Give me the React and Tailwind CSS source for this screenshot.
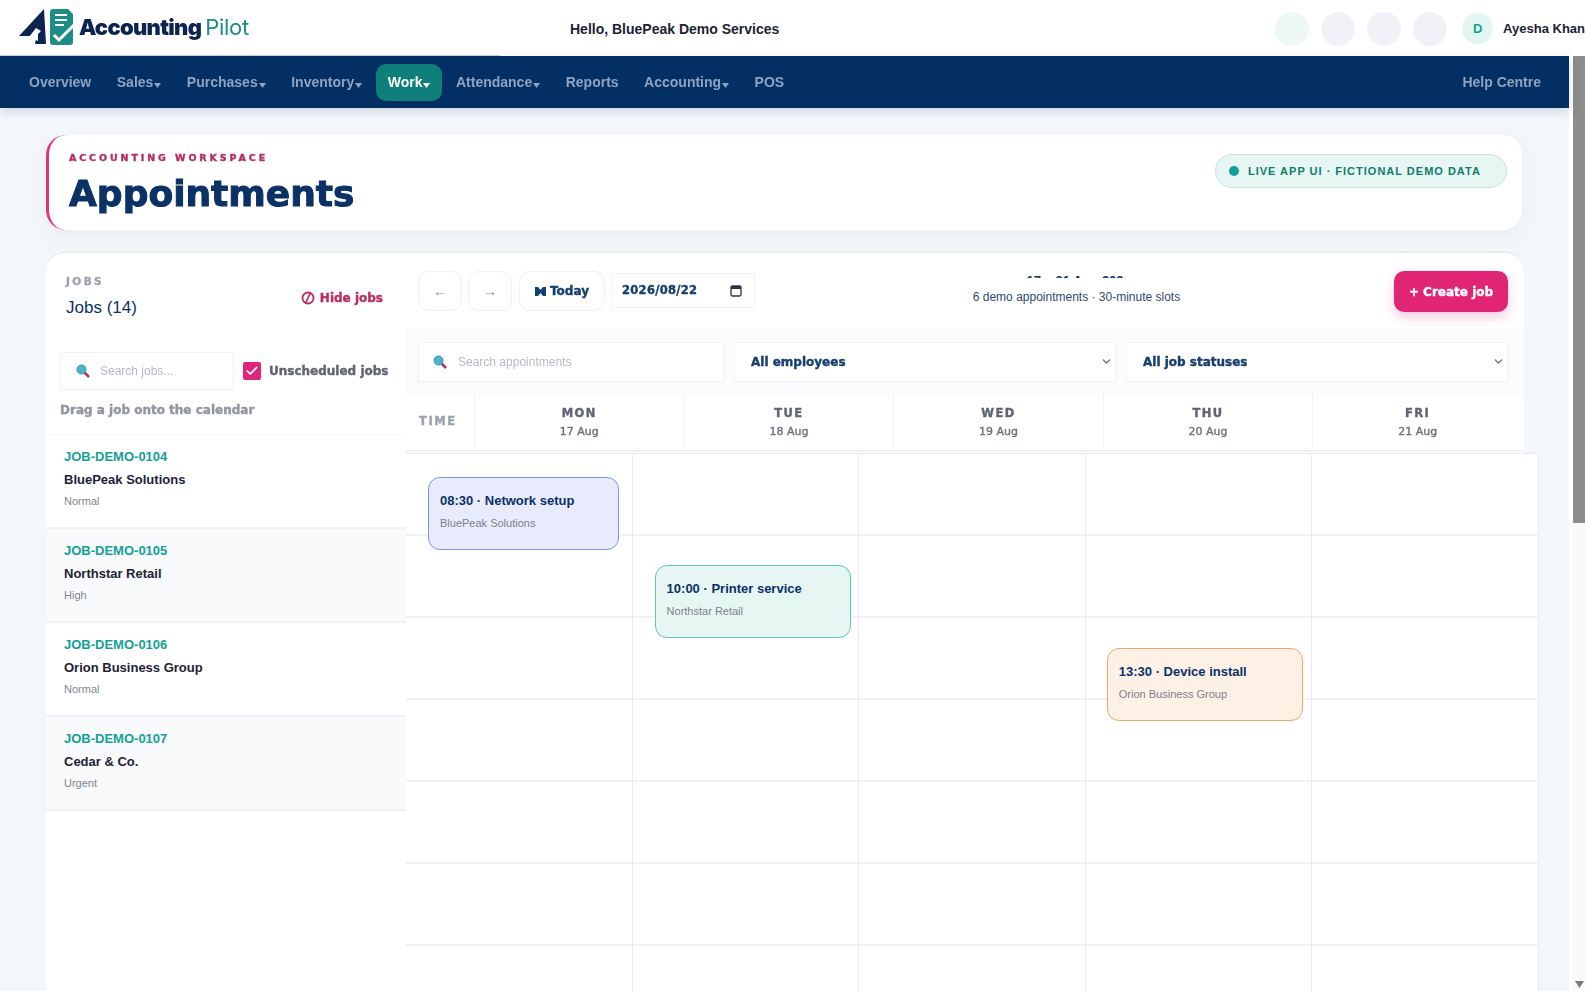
import React from 'react'
import { Check, ChevronDown } from 'lucide-react'

const navItems = [
    { label: 'Overview' },
    { label: 'Sales', caret: true },
    { label: 'Purchases', caret: true },
    { label: 'Inventory', caret: true },
    { label: 'Work', caret: true, active: true },
    { label: 'Attendance', caret: true },
    { label: 'Reports' },
    { label: 'Accounting', caret: true },
    { label: 'POS' },
]

const jobs = [
    { id: 'JOB-DEMO-0104', name: 'BluePeak Solutions', level: 'Normal' },
    { id: 'JOB-DEMO-0105', name: 'Northstar Retail', level: 'High', alt: true },
    { id: 'JOB-DEMO-0106', name: 'Orion Business Group', level: 'Normal' },
    { id: 'JOB-DEMO-0107', name: 'Cedar & Co.', level: 'Urgent', alt: true },
]

const days = [
    { day: 'MON', date: '17 Aug' },
    { day: 'TUE', date: '18 Aug' },
    { day: 'WED', date: '19 Aug' },
    { day: 'THU', date: '20 Aug' },
    { day: 'FRI', date: '21 Aug' },
]

const events = {
    '0-0': {
        title: '08:30 · Network setup',
        client: 'BluePeak Solutions',
        box: 'left-[22px] top-[23px] w-[191px] bg-[#e8ebfc] border-[#8093e4]',
    },
    '1-1': {
        title: '10:00 · Printer service',
        client: 'Northstar Retail',
        box: 'left-[22px] top-[29px] w-[196px] bg-[#e6f6f3] border-[#62c1ba]',
    },
    '2-3': {
        title: '13:30 · Device install',
        client: 'Orion Business Group',
        box: 'left-[21px] top-[30px] w-[196px] bg-[#fdf1e6] border-[#eda868]',
    },
}

const heavy = "font-['DejaVu_Sans',sans-serif] font-bold [-webkit-text-stroke:0.4px_currentColor] blur-[0.35px]"

const Logo = () => (
    <svg width="62" height="40" viewBox="0 0 62 40" className="shrink-0">
        <path d="M1 28 L26 1 L28 36 L17 36 L19 25 L12 28 Z" fill="#0d2350" />
        <path d="M11 29 L18 20 L23 23 L20 26 L20 33 Z" fill="#ffffff" />
        <path d="M32 4 Q32 1 35 1 H50 L55 6 V34 Q55 37 52 37 H35 Q32 37 32 34 Z" fill="#1d8d85" />
        <path d="M37 7 H49 M37 12 H49 M37 17 H46" stroke="#ffffff" strokeWidth="2.2" />
        <path d="M36 27 L41 32 L56 17" stroke="#ffffff" strokeWidth="3" fill="none" />
    </svg>
)

const Caret = ({ color }) => (
    <svg width="7" height="5" viewBox="0 0 7 5" className="mt-[7px] ml-[1px]">
        <path d="M0 0 H7 L3.5 5 Z" fill={color} />
    </svg>
)

const SearchIcon = () => (
    <svg width="14" height="14" viewBox="0 0 14 14" className="shrink-0">
        <path d="M8.5 8.5 L13 13" stroke="#a33a62" strokeWidth="2.5" />
        <circle cx="5.5" cy="5.5" r="4.5" fill="#4fb3cc" stroke="#3b8fa8" />
    </svg>
)

const FilterSelect = ({ label }) => (
    <div className="w-[382px] h-[40px] bg-white border border-[#eef2f6] flex items-center justify-between pl-4 pr-[2px]">
        <span className={`${heavy} text-[12px] text-[#18406f] mt-[1px]`}>{label}</span>
        <ChevronDown size={13} strokeWidth={2.5} className="text-[#5b6b80]" />
    </div>
)

const App = () => {
    return (
        <div className="h-[991px] overflow-hidden bg-white font-['Liberation_Sans',sans-serif]">
            {/* top bar */}
            <header className="h-[55px] flex items-center">
                <div className="w-[570px] shrink-0 pl-[18px] flex items-center">
                    <Logo />
                    <span className="ml-[-1px] font-['Inter',sans-serif] font-black text-[22px] tracking-[-0.7px] text-[#0d2350] blur-[0.3px]">Accounting</span>
                    <span className="ml-[4px] font-['Inter',sans-serif] text-[22px] tracking-[-0.3px] text-[#1d8d85] blur-[0.3px]">Pilot</span>
                </div>
                <p className="text-[14px] font-bold text-[#1c2333] mt-[3px]">Hello, BluePeak Demo Services</p>
                <div className="ml-auto mt-[2px] flex items-center shrink-0">
                    <div className="w-[34px] h-[34px] rounded-full bg-[#eef8f5]" />
                    <div className="ml-3 w-[34px] h-[34px] rounded-full bg-[#f0f2f8]" />
                    <div className="ml-3 w-[34px] h-[34px] rounded-full bg-[#f0f2f8]" />
                    <div className="ml-3 w-[34px] h-[34px] rounded-full bg-[#f0f2f8]" />
                    <div className="ml-[15px] w-[31px] h-[31px] rounded-full bg-[#e3f6f2] flex items-center justify-center text-[13px] font-bold text-[#16a394]">D</div>
                    <span className="ml-[10px] text-[13px] font-bold text-[#1c2333] whitespace-nowrap">Ayesha Khan</span>
                </div>
            </header>
            <div className="h-px w-[500px] bg-[#c9d3dc]" />

            <div className="flex h-[935px]">
                <div className="w-[1569px] shrink-0 flex flex-col bg-[#f4f7fa]">
                    {/* nav */}
                    <nav className="relative z-10 h-[52px] shrink-0 bg-[#042f63] shadow-[0_4px_10px_rgba(15,40,80,0.15)] flex items-center pl-[17px] pr-[28px] gap-[1.5px] text-[14px] font-bold text-[#8ea3c1]">
                        {navItems.map((item) => (
                            <a
                                key={item.label}
                                href="#"
                                className={`h-[37px] px-3 rounded-[10px] flex items-center ${item.active ? 'bg-[#0e7f7a] text-white' : ''}`}
                            >
                                <span className="blur-[0.4px]">{item.label}</span>
                                {item.caret && <Caret color={item.active ? '#ffffff' : '#8ea3c1'} />}
                            </a>
                        ))}
                        <a href="#" className="ml-auto blur-[0.4px]">Help Centre</a>
                    </nav>

                    <main className="flex-1 min-h-0 pl-[46px] pt-[27px] flex flex-col gap-[21px]">
                        {/* page title */}
                        <section className="relative w-[1476px] h-[95px] shrink-0 bg-white rounded-[20px] border-l-[3px] border-[#e0347e] shadow-[0_6px_16px_rgba(20,50,90,0.05)] pl-5 pt-[17px]">
                            <p className={`${heavy} text-[9.5px] leading-3 tracking-[2.9px] text-[#b5305f]`}>ACCOUNTING WORKSPACE</p>
                            <h1 className="font-['DejaVu_Sans',sans-serif] font-bold [-webkit-text-stroke:1px_#0b3166] blur-[0.35px] mt-[8px] text-[36px] leading-[44px] text-[#0b3166]">Appointments</h1>
                            <div className="absolute left-[1166px] top-[19px] w-[292px] h-[34px] rounded-full bg-[#e8f6f3] border border-[#c5e3dc] flex items-center pl-[13px] gap-[9px]">
                                <span className="w-[10px] h-[10px] rounded-full bg-[#14a098]" />
                                <span className="text-[11px] font-bold tracking-[1px] text-[#0f7d6c]">LIVE APP UI · FICTIONAL DEMO DATA</span>
                            </div>
                        </section>

                        {/* scheduler */}
                        <section className="w-[1478px] flex-1 min-h-0 bg-white rounded-t-[20px] border-t-2 border-[#e7ecf1] flex">
                            {/* jobs column */}
                            <aside className="w-[360px] shrink-0 flex flex-col">
                                <div className="h-[99px] pl-5 pt-[22px] pr-[23px] relative">
                                    <p className={`${heavy} text-[10.5px] leading-3 tracking-[2.4px] text-[#9ca3af]`}>JOBS</p>
                                    <p className="mt-[11px] text-[17px] leading-5 text-[#0b3166]">Jobs (14)</p>
                                    <div className={`absolute right-[23px] top-[36px] flex items-center gap-[5px] ${heavy} text-[12px] text-[#b8305f]`}>
                                        <svg width="14" height="14" viewBox="0 0 14 14">
                                            <circle cx="7" cy="7" r="5.5" fill="none" stroke="#b8305f" strokeWidth="1.8" />
                                            <path d="M9.5 1.5 L4.5 12.5" stroke="#b8305f" strokeWidth="1.8" />
                                        </svg>
                                        Hide jobs
                                    </div>
                                </div>
                                <div className="pl-[14px] flex items-center gap-[9px]">
                                    <div className="w-[174px] h-[38px] border border-[#f1f4f7] flex items-center pl-[15px] gap-[10px] text-[12px] text-[#b4bac4]">
                                        <SearchIcon />
                                        <span className="blur-[0.35px]">Search jobs...</span>
                                    </div>
                                    <div className="w-[18px] h-[18px] rounded-[2px] bg-[#e0267a] flex items-center justify-center">
                                        <Check size={14} strokeWidth={3} className="text-white" />
                                    </div>
                                    <span className={`${heavy} text-[12px] text-[#5f6673] whitespace-nowrap -ml-[1px]`}>Unscheduled jobs</span>
                                </div>
                                <p className={`${heavy} pl-[14px] mt-[13px] text-[12px] leading-[14px] text-[#9096a1]`}>Drag a job onto the calendar</p>
                                <div className="mt-[17px] border-t border-[#f5f7f9]">
                                    {jobs.map((job) => (
                                        <div key={job.id} className={`h-[94px] border-b-2 border-[#eef1f5] pl-[18px] pt-[14px] ${job.alt ? 'bg-[#f8fafc]' : 'bg-white'}`}>
                                            <p className="text-[13px] leading-4 font-bold text-[#14a098]">{job.id}</p>
                                            <p className="mt-[7px] text-[13px] leading-4 font-bold text-[#1c2333]">{job.name}</p>
                                            <p className="mt-[5px] text-[11px] leading-4 text-[#80868f]">{job.level}</p>
                                        </div>
                                    ))}
                                </div>
                            </aside>

                            {/* calendar */}
                            <div className="w-[1118px] shrink-0 flex flex-col">
                                <div className="h-[76px] shrink-0 pl-[12px] pr-[16px] pt-[18px] flex items-start">
                                    <button className="w-[44px] h-[40px] rounded-[11px] border border-[#eef1f5] text-[14px] text-[#8a93a0]">←</button>
                                    <button className="ml-[6px] w-[44px] h-[40px] rounded-[11px] border border-[#eef1f5] text-[14px] text-[#8a93a0]">→</button>
                                    <button className="ml-[7px] w-[86px] h-[40px] rounded-[11px] border border-[#eef1f5] flex items-center justify-center gap-[4px]">
                                        <svg width="11" height="9" viewBox="0 0 11 9">
                                            <path d="M0 0 H3 L5.5 3 L8 0 H11 V9 H8 L5.5 6 L3 9 H0 Z" fill="#0f3f73" />
                                        </svg>
                                        <span className={`${heavy} text-[12px] text-[#18406f]`}>Today</span>
                                    </button>
                                    <div className="ml-[6px] mt-[2px] w-[144px] h-[35px] border border-[#f1f4f7] flex items-center justify-between pl-[10px] pr-[12px]">
                                        <span className={`${heavy} text-[11.5px] tracking-[0.3px] text-[#18406f]`}>2026/08/22</span>
                                        <svg width="12" height="12" viewBox="0 0 12 12">
                                            <rect x="1" y="1" width="10" height="10" rx="1.5" fill="none" stroke="#2b3440" strokeWidth="1.3" />
                                            <rect x="1" y="1" width="10" height="3" fill="#2b3440" />
                                        </svg>
                                    </div>
                                    <div className="flex-1 flex flex-col items-center">
                                        <div className="h-[7px] overflow-hidden w-[100px] relative">
                                            <span className="absolute left-[2px] top-[2px] text-[13px] leading-4 font-bold text-[#0b3166] whitespace-nowrap">17 – 21 Aug 2026</span>
                                        </div>
                                        <p className="mt-[11px] ml-[4px] text-[12px] leading-4 text-[#2d4a73]">6 demo appointments · 30-minute slots</p>
                                    </div>
                                    <button className="w-[114px] h-[41px] rounded-[10px] bg-[#df2573] shadow-[0_5px_12px_rgba(223,37,115,0.25)]">
                                        <span className={`block ${heavy} text-[12px] text-white`}>+ Create job</span>
                                    </button>
                                </div>

                                <div className="h-[65px] shrink-0 bg-[#f9fbfc] pl-[12px] pr-[16px] flex items-center gap-[10px]">
                                    <div className="w-[306px] h-[40px] bg-white border border-[#eef2f6] flex items-center pl-[14px] gap-[11px] text-[12px] text-[#b4bac4]">
                                        <SearchIcon />
                                        <span className="blur-[0.35px]">Search appointments</span>
                                    </div>
                                    <FilterSelect label="All employees" />
                                    <FilterSelect label="All job statuses" />
                                </div>

                                <div className="h-[58px] shrink-0 flex border-b-2 border-[#eef1f5] pr-[2px]">
                                    <div className="w-[68px] shrink-0 pl-[13px] flex items-center">
                                        <span className={`${heavy} text-[11.5px] tracking-[1.6px] text-[#9ca3af]`}>TIME</span>
                                    </div>
                                    {days.map((d) => (
                                        <div key={d.day} className="flex-1 border-l border-[#f1f4f7] flex flex-col items-center pt-[11px]">
                                            <span className={`${heavy} text-[11.5px] leading-4 tracking-[1.4px] text-[#5f6673]`}>{d.day}</span>
                                            <span className={`${heavy} mt-[3px] text-[11px] leading-4 font-normal text-[#6d747f]`}>{d.date}</span>
                                        </div>
                                    ))}
                                </div>

                                <div className="mt-[1px] w-[1133px] shrink-0 grid grid-cols-5 bg-white border-t border-[#e8ecf0]">
                                    {Array.from({ length: 35 }, (_, i) => {
                                        const row = Math.floor(i / 5)
                                        const ev = events[`${row}-${i % 5}`]
                                        return (
                                            <div key={i} className="relative h-[82px] border-r border-b-2 border-r-[#e8ebef] border-b-[#f0f2f5]">
                                                {ev && (
                                                    <div className={`absolute z-10 h-[73px] rounded-[12px] border-[1.5px] pl-[11px] pt-[15px] ${ev.box}`}>
                                                        <p className="text-[13px] leading-4 font-bold text-[#0b3166]">{ev.title}</p>
                                                        <p className="mt-[6px] text-[11px] leading-4 text-[#7b818b]">{ev.client}</p>
                                                    </div>
                                                )}
                                            </div>
                                        )
                                    })}
                                </div>
                            </div>
                        </section>
                    </main>
                </div>

                {/* page scrollbar */}
                <div className="w-[16px] shrink-0 pl-1 flex flex-col bg-white">
                    <div className="h-[467px] bg-[#8c8c8c]" />
                    <div className="flex-1 bg-[#fafafa] flex items-end justify-center pb-[3px]">
                        <svg width="9" height="7" viewBox="0 0 9 7">
                            <path d="M0 0 H9 L4.5 7 Z" fill="#7a7a7a" />
                        </svg>
                    </div>
                </div>
            </div>
        </div>
    )
}

export default App
